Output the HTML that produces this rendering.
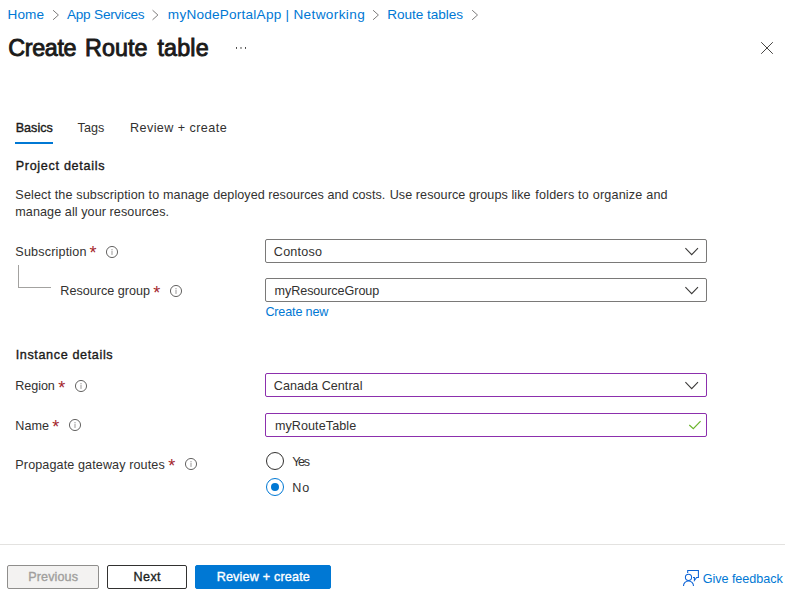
<!DOCTYPE html>
<html lang="en">
<head>
<meta charset="utf-8">
<title>Create Route table</title>
<style>
*{box-sizing:border-box;margin:0;padding:0}
html,body{width:785px;height:595px;background:#fff;overflow:hidden}
body{position:relative;font-family:"Liberation Sans",sans-serif;font-size:13px;color:#323130}
.t{position:absolute;white-space:nowrap;display:block;font-weight:400}
.g{font-size:13px;font-weight:400;line-height:0;height:0}
svg{position:absolute;overflow:visible}
.box{position:absolute;left:265px;width:442px;height:24px;border:1px solid #7a7978;border-radius:2px;background:#fff}
.box.v{border-color:#8c2fad}
.radio{position:absolute;width:18px;height:18px;border:1px solid #323130;border-radius:50%;background:#fff}
.radio.on{border-color:#0078d4}
.radio.on::after{content:"";position:absolute;left:4px;top:4px;width:8px;height:8px;border-radius:50%;background:#0078d4}
.btn{position:absolute;top:565px;height:24px;border:1px solid #323130;border-radius:2px;background:#fff}
</style>
</head>
<body>
<!-- breadcrumb separators -->
<svg style="left:0;top:0" width="785" height="30"><g fill="none" stroke="#6f6e6d" stroke-width="0.9">
<path d="M53.05 10.2 L58.4 15 L53.05 19.8"/>
<path d="M152.55 10.2 L157.9 15 L152.55 19.8"/>
<path d="M373.05 10.2 L378.4 15 L373.05 19.8"/>
<path d="M472.15 10.2 L477.5 15 L472.15 19.8"/>
</g></svg>
<!-- ellipsis + close -->
<svg style="left:0;top:0" width="260" height="60"><g fill="#4a4948"><rect x="236" y="47" width="1" height="1.9"/><rect x="240.5" y="47" width="1" height="1.9"/><rect x="245" y="47" width="1" height="1.9"/></g></svg>
<svg style="left:760px;top:41px" width="14" height="14" viewBox="0 0 14 14"><path d="M1.2 1.2 L12.8 12.8 M12.8 1.2 L1.2 12.8" stroke="#484644" stroke-width="1" fill="none"/></svg>
<!-- active tab underline -->
<div style="position:absolute;left:15px;top:142px;width:38px;height:2px;background:#0078d4"></div>
<!-- tree connector -->
<div style="position:absolute;left:18px;top:265px;width:33px;height:23px;border-left:1px solid #a3a2a0;border-bottom:1px solid #a3a2a0"></div>
<!-- inputs -->
<div class="box" style="top:239px"><span id="v1" class="t" style="left:7.86px;top:5px;font-size:12.6px;line-height:15px;letter-spacing:0.193px;color:#323130;">Contoso</span></div>
<div class="box" style="top:278px"><span id="v2" class="t" style="left:8.53px;top:5px;font-size:12.6px;line-height:15px;letter-spacing:-0.067px;color:#323130;">myResourceGroup</span></div>
<div class="box v" style="top:373px"><span id="v3" class="t" style="left:7.86px;top:5px;font-size:12.6px;line-height:15px;letter-spacing:0.029px;color:#323130;">Canada Central</span></div>
<div class="box v" style="top:413px"><span id="v4" class="t" style="left:8.88px;top:5px;font-size:12.6px;line-height:15px;letter-spacing:0.071px;color:#323130;">myRouteTable</span></div>
<svg style="left:0;top:0" width="785" height="595"><g fill="none" stroke="#3b3a39" stroke-width="1.1">
<path d="M685.4 248.2 L691.7 254.6 L698 248.2"/>
<path d="M685.4 287.2 L691.7 293.6 L698 287.2"/>
<path d="M685.4 382.2 L691.7 388.6 L698 382.2"/>
</g>
<path d="M689.3 425 L693.3 428.6 L700.6 421.1" fill="none" stroke="#6ab42a" stroke-width="1.15"/>
<!-- info icons -->
<g fill="none" stroke="#5c5b5a" stroke-width="0.95">
<circle cx="112" cy="252" r="5.55"/><circle cx="176" cy="291" r="5.55"/><circle cx="81" cy="386" r="5.55"/><circle cx="75" cy="425" r="5.55"/><circle cx="191" cy="464" r="5.55"/>
</g>
<g fill="#a3a2a1">
<rect x="111.45" y="249" width="1.1" height="1.2"/><rect x="111.45" y="250.8" width="1.1" height="4.1"/>
<rect x="175.45" y="288" width="1.1" height="1.2"/><rect x="175.45" y="289.8" width="1.1" height="4.1"/>
<rect x="80.45" y="383" width="1.1" height="1.2"/><rect x="80.45" y="384.8" width="1.1" height="4.1"/>
<rect x="74.45" y="422" width="1.1" height="1.2"/><rect x="74.45" y="423.8" width="1.1" height="4.1"/>
<rect x="190.45" y="461" width="1.1" height="1.2"/><rect x="190.45" y="462.8" width="1.1" height="4.1"/>
</g>
<!-- feedback icon -->
<g fill="none" stroke="#0b62d6" stroke-width="1.05" stroke-linejoin="miter">
<path d="M687.7 573 V570.5 H698.4 V577.5 H696.6 L694.4 580.5 V577.5 H693"/>
<circle cx="688.5" cy="577.3" r="3.1"/>
<path d="M683.5 586 A5 5 0 0 1 693.5 586"/>
</g>
</svg>
<!-- radios -->
<div class="radio" role="radio" aria-checked="false" style="left:266px;top:452px"></div>
<div class="radio on" role="radio" aria-checked="true" style="left:266px;top:478px"></div>
<!-- footer -->
<div style="position:absolute;left:0;top:544px;width:785px;height:1px;background:#e3e2e0"></div>
<div class="btn" role="button" aria-disabled="true" style="left:7px;width:92px;background:#f3f2f1;border-color:#8f8e8c"><span id="b1" class="t" style="left:20.33px;top:4px;font-size:12.6px;line-height:15px;letter-spacing:0.099px;color:#a19f9d;-webkit-text-stroke:0.36px;">Previous</span></div>
<div class="btn" role="button" style="left:107px;width:80px"><span id="b2" class="t" style="left:25.41px;top:4px;font-size:12.6px;line-height:15px;letter-spacing:0.441px;color:#201f1e;-webkit-text-stroke:0.36px;">Next</span></div>
<div class="btn" role="button" style="left:195px;width:136px;background:#0078d4;border-color:#0078d4"><span id="b3" class="t" style="left:20.67px;top:4px;font-size:12.6px;line-height:15px;letter-spacing:0.184px;color:#ffffff;-webkit-text-stroke:0.36px;">Review + create</span></div>

<!-- text -->
<nav class="g"><span id="bc1" class="t" style="left:7.55px;top:7px;font-size:13.6px;line-height:16px;letter-spacing:0.058px;color:#0078d4;">Home</span> <span id="bc2" class="t" style="left:66.93px;top:7px;font-size:13.6px;line-height:16px;letter-spacing:-0.215px;color:#0078d4;">App Services</span> <span id="bc3" class="t" style="left:167.86px;top:7px;font-size:13.6px;line-height:16px;letter-spacing:0.217px;color:#0078d4;">myNodePortalApp |</span> <span id="bc3b" class="t" style="left:293.39px;top:7px;font-size:13.6px;line-height:16px;letter-spacing:0.377px;color:#0078d4;">Networking</span> <span id="bc4" class="t" style="left:387.24px;top:7px;font-size:13.6px;line-height:16px;letter-spacing:-0.046px;color:#0078d4;">Route tables</span></nav>
<h1 class="g"><span id="ttl" class="t" style="left:8.33px;top:35px;font-size:23.3px;line-height:27px;letter-spacing:-0.352px;color:#1b1a19;-webkit-text-stroke:0.9px;">Create</span> <span id="ttl2" class="t" style="left:85.11px;top:35px;font-size:23.3px;line-height:27px;letter-spacing:0.029px;color:#1b1a19;-webkit-text-stroke:0.9px;">Route</span> <span id="ttl3" class="t" style="left:157.41px;top:35px;font-size:23.3px;line-height:27px;letter-spacing:0.167px;color:#1b1a19;-webkit-text-stroke:0.9px;">table</span></h1>
<div class="g"><span id="tb1" class="t" style="left:15.67px;top:121px;font-size:12.6px;line-height:15px;letter-spacing:0.013px;color:#1b1a19;-webkit-text-stroke:0.36px;">Basics</span> <span id="tb2" class="t" style="left:77.58px;top:121px;font-size:12.6px;line-height:15px;letter-spacing:0.069px;color:#323130;">Tags</span> <span id="tb3" class="t" style="left:129.95px;top:121px;font-size:12.6px;line-height:15px;letter-spacing:0.433px;color:#323130;">Review + create</span></div>
<h2 class="g"><span id="h1" class="t" style="left:15.67px;top:159px;font-size:12.6px;line-height:15px;letter-spacing:0.691px;color:#1b1a19;-webkit-text-stroke:0.36px;">Project details</span></h2>
<p class="g"><span id="d1" class="t" style="left:15.36px;top:188px;font-size:12.6px;line-height:15px;letter-spacing:0.125px;color:#323130;">Select the subscription to manage</span> <span id="d1b" class="t" style="left:213.29px;top:188px;font-size:12.6px;line-height:15px;letter-spacing:0.042px;color:#323130;">deployed resources and costs.</span> <span id="d1c" class="t" style="left:389.68px;top:188px;font-size:12.6px;line-height:15px;letter-spacing:0.067px;color:#323130;">Use resource groups like</span> <span id="d1d" class="t" style="left:535.30px;top:188px;font-size:12.6px;line-height:15px;letter-spacing:0.191px;color:#323130;">folders to organize and</span> <span id="d2" class="t" style="left:15.28px;top:205px;font-size:12.6px;line-height:15px;letter-spacing:0.076px;color:#323130;">manage all your resources.</span></p>
<div class="g"><span id="l1" class="t" style="left:15.36px;top:245px;font-size:12.6px;line-height:15px;letter-spacing:0.164px;color:#323130;">Subscription</span> <span id="a1" class="t" style="left:89.54px;top:243.34px;font-size:18px;line-height:20px;color:#a4262c">*</span></div>
<div class="g"><span id="l2" class="t" style="left:60.36px;top:284px;font-size:12.6px;line-height:15px;letter-spacing:-0.005px;color:#323130;">Resource group</span> <span id="a2" class="t" style="left:153.32px;top:283.20px;font-size:18px;line-height:20px;color:#a4262c">*</span> <span id="cn" class="t" style="left:265.38px;top:305px;font-size:12.6px;line-height:15px;letter-spacing:-0.151px;color:#0078d4;">Create new</span></div>
<h2 class="g"><span id="h2" class="t" style="left:15.65px;top:348px;font-size:12.6px;line-height:15px;letter-spacing:0.631px;color:#1b1a19;-webkit-text-stroke:0.36px;">Instance details</span></h2>
<div class="g"><span id="l3" class="t" style="left:15.36px;top:379px;font-size:12.6px;line-height:15px;letter-spacing:-0.093px;color:#323130;">Region</span> <span id="a3" class="t" style="left:58.32px;top:378.00px;font-size:18px;line-height:20px;color:#a4262c">*</span></div>
<div class="g"><span id="l4" class="t" style="left:15.35px;top:419px;font-size:12.6px;line-height:15px;letter-spacing:0.051px;color:#323130;">Name</span> <span id="a4" class="t" style="left:52.32px;top:417.00px;font-size:18px;line-height:20px;color:#a4262c">*</span></div>
<div class="g"><span id="l5" class="t" style="left:15.36px;top:458px;font-size:12.6px;line-height:15px;letter-spacing:0.100px;color:#323130;">Propagate gateway routes</span> <span id="a5" class="t" style="left:168.32px;top:456.00px;font-size:18px;line-height:20px;color:#a4262c">*</span> <span id="r1" class="t" style="left:292.17px;top:455px;font-size:12.6px;line-height:15px;letter-spacing:-1.311px;color:#323130;">Yes</span> <span id="r2" class="t" style="left:292.23px;top:481px;font-size:12.6px;line-height:15px;letter-spacing:0.945px;color:#323130;">No</span></div>
<div class="g"><span id="gf" class="t" style="left:702.78px;top:572px;font-size:12.6px;line-height:15px;letter-spacing:-0.050px;color:#0078d4;">Give feedback</span></div>
</body>
</html>
